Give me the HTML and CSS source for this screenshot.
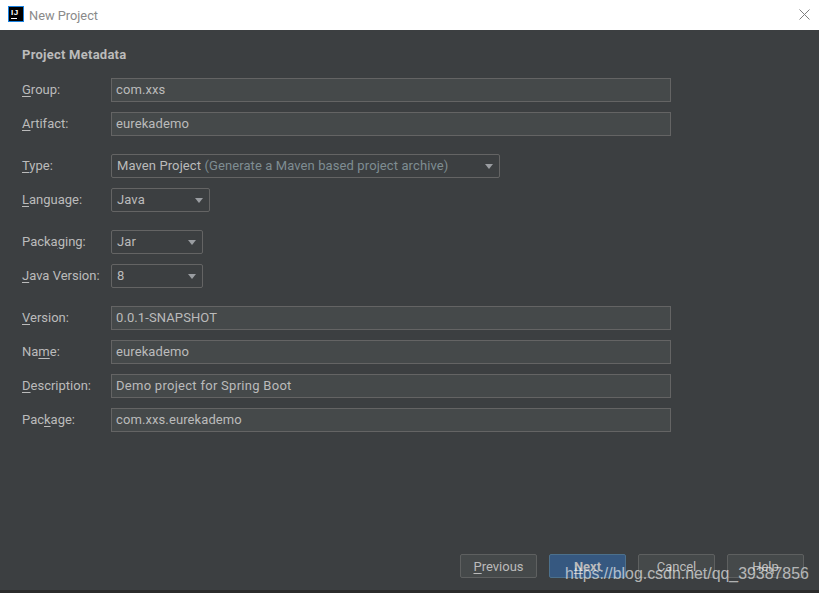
FILE: index.html
```html
<!DOCTYPE html>
<html lang="en">
<head>
<meta charset="utf-8">
<title>New Project</title>
<link rel="stylesheet" href="styles.css">
</head>
<body>
<div class="dialog">
  <header class="titlebar">
    <svg class="app-icon" width="16" height="16" viewBox="0 0 16 16">
      <rect x="0" y="0" width="16" height="16" fill="#1a82e2"/>
      <rect x="1" y="1" width="14" height="14" fill="#000"/>
      <rect x="3" y="12" width="6" height="1" fill="#fff"/>
      <text x="3" y="9" class="app-icon-text">IJ</text>
    </svg>
    <span class="title">New Project</span>
    <svg class="close" width="11" height="11" viewBox="0 0 11 11">
      <path d="M.5.5l10 10M10.5.5l-10 10" stroke="#7f7f7f" stroke-width="1" fill="none"/>
    </svg>
  </header>
  <main class="content">
    <h1 class="heading">Project Metadata</h1>
    <div class="groups">
      <section class="group">
        <div class="row"><label class="label"><u>G</u>roup:</label><div class="field">com.xxs</div></div>
        <div class="row"><label class="label"><u>A</u>rtifact:</label><div class="field">eurekademo</div></div>
      </section>
      <section class="group">
        <div class="row"><label class="label"><u>T</u>ype:</label><div class="select select-type"><span class="select-value">Maven Project <span class="muted">(Generate a Maven based project archive)</span></span><i class="arrow"></i></div></div>
        <div class="row"><label class="label"><u>L</u>anguage:</label><div class="select select-lang"><span class="select-value">Java</span><i class="arrow"></i></div></div>
      </section>
      <section class="group">
        <div class="row"><label class="label">Packa<u>g</u>ing:</label><div class="select select-small"><span class="select-value">Jar</span><i class="arrow"></i></div></div>
        <div class="row"><label class="label"><u>J</u>ava Version:</label><div class="select select-small"><span class="select-value">8</span><i class="arrow"></i></div></div>
      </section>
      <section class="group">
        <div class="row"><label class="label"><u>V</u>ersion:</label><div class="field">0.0.1-SNAPSHOT</div></div>
        <div class="row"><label class="label">Na<u>m</u>e:</label><div class="field">eurekademo</div></div>
        <div class="row"><label class="label"><u>D</u>escription:</label><div class="field field-wide">Demo project for Spring Boot</div></div>
        <div class="row"><label class="label">Pac<u>k</u>age:</label><div class="field">com.xxs.eurekademo</div></div>
      </section>
    </div>
    <footer class="buttons">
      <button class="btn"><u>P</u>revious</button>
      <button class="btn btn-primary"><u>N</u>ext</button>
      <button class="btn">Cancel</button>
      <button class="btn">Help</button>
    </footer>
  </main>
  <div class="bottom-strip"></div>
</div>
<div class="watermark">https://blog.csdn.net/qq_39387856</div>
</body>
</html>
```
FILE: styles.css
```css
* { box-sizing: border-box; }
html, body { margin: 0; padding: 0; }
body {
  width: 819px;
  height: 593px;
  overflow: hidden;
  position: relative;
  font-family: Roboto, "Open Sans", sans-serif;
  font-size: 13px;
  color: #bbbbbb;
  background: #3c3f41;
}
.dialog { display: flex; flex-direction: column; height: 593px; }
.titlebar {
  height: 30px;
  background: #fff;
  display: flex;
  align-items: center;
  padding: 0 9px 0 8px;
  flex: none;
}
.app-icon { flex: none; margin-bottom: 2px; }
.app-icon-text { font: bold 8px "Liberation Sans", sans-serif; letter-spacing: 0.5px; fill: #fff; }
.title { margin-left: 5px; font-size: 12.8px; color: #8a8a8a; }
.close { margin-left: auto; margin-bottom: 2px; }
.content {
  flex: 1;
  display: flex;
  flex-direction: column;
  padding: 0 15px 12px 22px;
  background: #3c3f41;
}
.heading {
  margin: 16px 0 0;
  font-size: 13px;
  letter-spacing: 0.25px;
  line-height: 18px;
  font-weight: 700;
  color: #bbbbbb;
}
.groups { display: flex; flex-direction: column; gap: 18px; margin-top: 14px; }
.group { display: flex; flex-direction: column; gap: 10px; }
.row { display: flex; align-items: center; height: 24px; }
.label { width: 89px; flex: none; padding-bottom: 2px; }
u { text-underline-offset: 2px; }
.field {
  width: 560px;
  height: 24px;
  line-height: 22px;
  padding: 0 4px;
  letter-spacing: 0.1px;
  background: #45494a;
  border: 1px solid #646464;
}
.field-wide { letter-spacing: 0.28px; }
.select {
  height: 24px;
  padding: 0 5px;
  display: flex;
  align-items: center;
  justify-content: space-between;
  letter-spacing: 0.1px;
  background: #3c3f41;
  border: 1px solid #646464;
  border-radius: 2px;
}
.select-value { padding-bottom: 2px; }
.select-type { width: 389px; }
.select-lang { width: 99px; }
.select-small { width: 92px; }
.muted { color: #7f8d92; }
.arrow {
  width: 0;
  height: 0;
  margin-right: 1px;
  border-left: 4.5px solid transparent;
  border-right: 4.5px solid transparent;
  border-top: 5px solid #9a9da1;
}
.buttons {
  margin-top: auto;
  display: flex;
  justify-content: flex-end;
  gap: 12px;
}
.btn {
  width: 77px;
  height: 24px;
  padding: 0;
  font: inherit;
  color: #bbbbbb;
  background: #45494a;
  border: 1px solid #5e6060;
  border-radius: 2px;
}
.btn-primary {
  font-weight: 700;
  background: #365880;
  border-color: #4c708c;
}
.bottom-strip { height: 3px; flex: none; background: #2b2b2b; }
.watermark {
  position: absolute;
  left: 565px;
  top: 564px;
  font-family: "Liberation Sans", Arial, sans-serif;
  font-size: 15.9px;
  line-height: 20px;
  color: rgba(255, 255, 255, 0.62);
  white-space: nowrap;
}
```
